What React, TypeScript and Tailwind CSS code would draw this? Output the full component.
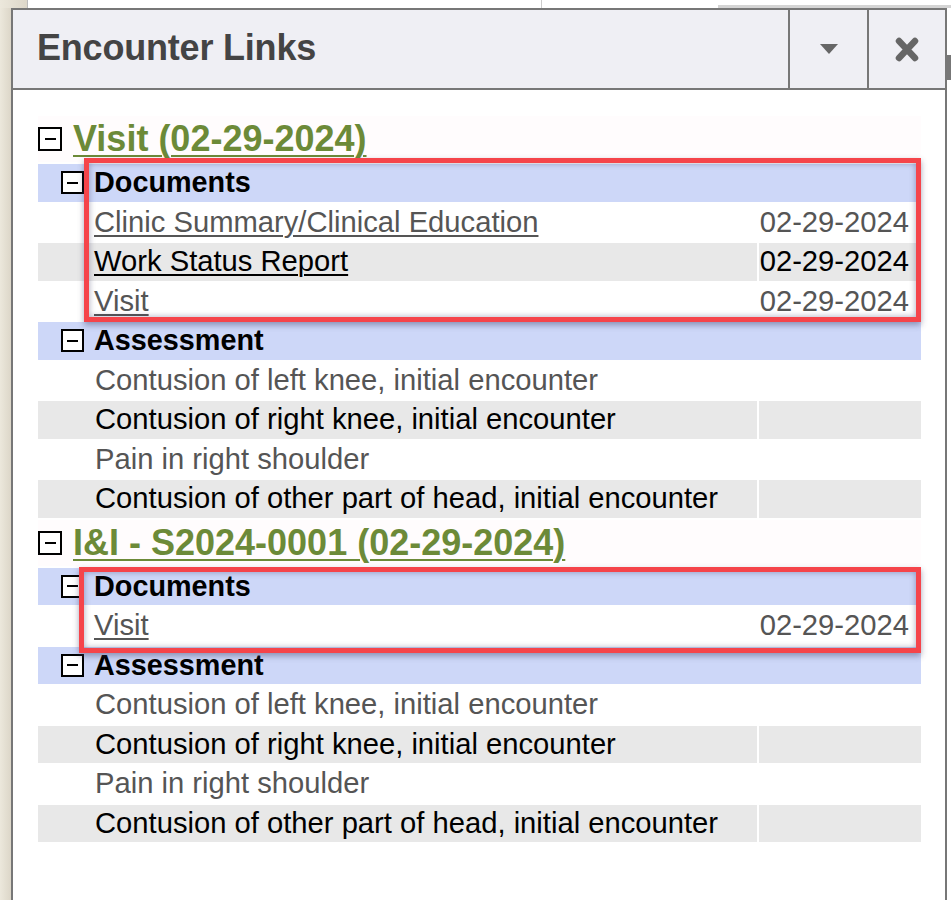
import React from 'react'

type Doc = { name: string; date: string }

type Section = {
  title: string
  docs: Doc[]
  boxClass: string
  assessments: string[]
}

const assessments = [
  'Contusion of left knee, initial encounter',
  'Contusion of right knee, initial encounter',
  'Pain in right shoulder',
  'Contusion of other part of head, initial encounter',
]

const sections: Section[] = [
  {
    title: 'Visit (02-29-2024)',
    docs: [
      { name: 'Clinic Summary/Clinical Education', date: '02-29-2024' },
      { name: 'Work Status Report', date: '02-29-2024' },
      { name: 'Visit', date: '02-29-2024' },
    ],
    boxClass: 'top-[-6px] bottom-[-2px] left-[46px]',
    assessments,
  },
  {
    title: 'I&I - S2024-0001 (02-29-2024)',
    docs: [{ name: 'Visit', date: '02-29-2024' }],
    boxClass: 'top-[-1px] bottom-[-8px] left-[41px]',
    assessments,
  },
]

function Toggle({ size = 24 }: { size?: number }) {
  return (
    <span
      className="flex shrink-0 items-center justify-center border-2 border-black bg-white"
      style={{ width: size, height: size }}
    >
      <span className="block h-[2px] w-[11px] bg-black" />
    </span>
  )
}

function GroupHeader({ label }: { label: string }) {
  return (
    <div className="flex h-[37.5px] items-center bg-[#cdd7f8] pl-[23px]">
      <Toggle size={23} />
      <span className="ml-[10px] text-[28.8px] font-bold leading-none text-black">{label}</span>
    </div>
  )
}

function ItemRow({
  index,
  children,
  right,
}: {
  index: number
  children: React.ReactNode
  right?: React.ReactNode
}) {
  const grey = index % 2 === 1
  const bg = grey ? 'bg-[#e8e8e8]' : 'bg-white'
  const color = grey ? 'text-black' : 'text-[#555]'
  return (
    <div className={`flex h-[37.5px] gap-[2px] text-[29.2px] leading-none ${color}`}>
      <div className={`flex flex-1 items-center pl-[56px] ${bg}`}>{children}</div>
      <div className={`flex w-[162px] items-center justify-end pr-[12px] ${bg}`}>{right}</div>
    </div>
  )
}

function EncounterSection({ section }: { section: Section }) {
  return (
    <>
      <div className="flex h-[46px] items-center bg-[#fffcfd]">
        <Toggle />
        <a className="ml-[11px] text-[36px] font-bold leading-none text-[#6c8a38] underline decoration-2 underline-offset-[4px]">
          {section.title}
        </a>
      </div>

      <div className="relative flex flex-col gap-[2px]">
        <GroupHeader label="Documents" />
        {section.docs.map((d, i) => (
          <ItemRow key={d.name + i} index={i} right={d.date}>
            <a className="underline decoration-[1.5px] underline-offset-[3px]">{d.name}</a>
          </ItemRow>
        ))}
        <div
          className={`pointer-events-none absolute right-0 border-[5px] border-[#f5444a] shadow-[0_3px_6px_rgba(60,60,100,0.45),inset_0_0_6px_rgba(60,60,100,0.45)] ${section.boxClass}`}
        />
      </div>

      <div className="flex flex-col gap-[2px]">
        <GroupHeader label="Assessment" />
        {section.assessments.map((a, i) => (
          <ItemRow key={a} index={i}>
            <span className="pl-[1px]">{a}</span>
          </ItemRow>
        ))}
      </div>
    </>
  )
}

export default function App() {
  return (
    <div
      className="flex h-[900px] w-[951px] flex-col overflow-hidden bg-white"
      style={{ fontFamily: '"Liberation Sans", Arial, sans-serif' }}
    >
      {/* strip above the panel */}
      <div className="flex h-[8px] shrink-0">
        <div className="w-[27px] bg-gradient-to-r from-[#ece8dc] to-[#ddd7c9]" />
        <div className="w-[1px] bg-[#bbb]" />
        <div className="w-[513px] bg-white" />
        <div className="w-[1px] bg-[#ccc]" />
        <div className="w-[176px] bg-white" />
        <div className="flex flex-1 flex-col">
          <div className="h-[5px] bg-white" />
          <div className="flex-1 bg-[#d4d4d4]" />
        </div>
      </div>

      <div className="flex flex-1">
        <div className="w-[11px] shrink-0 bg-gradient-to-r from-[#ece8dc] to-[#dcd6c8]" />

        <div className="flex w-[936px] shrink-0 flex-col border-2 border-b-0 border-[#777] bg-white">
          <div className="flex h-[80px] shrink-0 border-b-2 border-[#777] bg-[#efeff4]">
            <div className="flex flex-1 items-center pb-[2px] pl-[24px] text-[36px] font-bold tracking-[-0.2px] text-[#444]">
              Encounter Links
            </div>
            <div className="flex w-[79px] items-center justify-center border-l-2 border-[#777]">
              <span className="block h-0 w-0 border-x-[9px] border-t-[10px] border-x-transparent border-t-[#666]" />
            </div>
            <div className="flex w-[78px] items-center justify-center border-l-2 border-[#777]">
              <svg width="24" height="25" viewBox="0 0 24 25">
                <path d="M4 4 L20 21 M20 4 L4 21" stroke="#666" strokeWidth="6.5" strokeLinecap="round" />
              </svg>
            </div>
          </div>

          <div className="flex flex-col gap-[2px] pl-[25px] pr-[24px] pt-[26px]">
            {sections.map(s => (
              <EncounterSection key={s.title} section={s} />
            ))}
          </div>
        </div>

        <div className="flex flex-1 flex-col">
          <div className="h-[47px] bg-white" />
          <div className="h-[25px] bg-[#777]" />
          <div className="flex-1 bg-white" />
        </div>
      </div>
    </div>
  )
}
